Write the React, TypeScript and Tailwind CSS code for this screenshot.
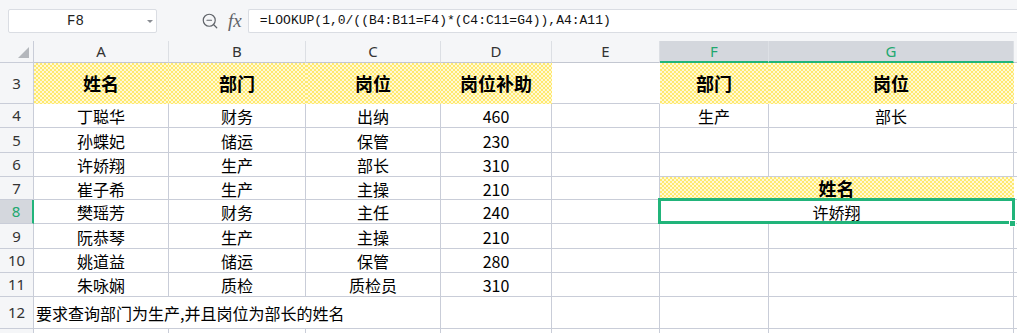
import { ZoomOut } from 'lucide-react';

// 表格用のクラス
const CJK = "font-['Microsoft_YaHei','Noto_Sans_CJK_SC',sans-serif]";
const LINE = 'border-[#c9cdd8]';
const YELLOW =
  'bg-[#ffe96e] bg-[radial-gradient(circle_at_1px_1px,#fff9d6_0.8px,transparent_0.9px),radial-gradient(circle_at_3px_3px,#fff9d6_0.8px,transparent_0.9px)] bg-size-[4px_4px]';

const COL_W = ['w-[135px]', 'w-[137px]', 'w-[135px]', 'w-[111px]', 'w-[108px]', 'w-[109px]', 'w-[245px]'];
const LETTERS = ['A', 'B', 'C', 'D', 'E', 'F', 'G'];

const rows = [
  { n: 4, h: 'h-[24px]', d: ['丁聪华', '财务', '出纳', '460'], f: '生产', g: '部长' },
  { n: 5, h: 'h-[25px]', d: ['孙蝶妃', '储运', '保管', '230'] },
  { n: 6, h: 'h-[24px]', d: ['许娇翔', '生产', '部长', '310'] },
  { n: 7, h: 'h-[23px]', d: ['崔子希', '生产', '主操', '210'], merged: 'title' },
  { n: 8, h: 'h-[24px]', d: ['樊瑶芳', '财务', '主任', '240'], merged: 'result' },
  { n: 9, h: 'h-[25px]', d: ['阮恭琴', '生产', '主操', '210'] },
  { n: 10, h: 'h-[24px]', d: ['姚道益', '储运', '保管', '280'] },
  { n: 11, h: 'h-[24px]', d: ['朱咏娴', '质检', '质检员', '310'] },
];

function RowHead({ n, active }: { n?: number; active?: boolean }) {
  return (
    <div
      className={`w-[34px] shrink-0 flex items-center justify-center border-b ${LINE} text-[15px] font-['Noto_Sans',sans-serif] ${
        active ? 'bg-[#d4d7dd] text-[#21a86f] border-r-2 border-r-[#21b47a]' : 'bg-[#f5f6f8] text-[#333] border-r'
      }`}
    >
      {n}
    </div>
  );
}

function Cell({ w, children, className = '' }: { w: string; children?: React.ReactNode; className?: string }) {
  return (
    <div className={`${w} shrink-0 flex items-center justify-center border-r border-b ${LINE} ${className}`}>
      {children}
    </div>
  );
}

export default function App() {
  return (
    <div className={`w-[1017px] h-[333px] overflow-hidden bg-white text-black ${CJK}`}>
      {/* 数式バー */}
      <div className="h-[41px] bg-[#f5f6f8] flex items-start pt-[9px] pl-[8px]">
        <div className="relative w-[149px] h-[24px] bg-white border border-[#dadde3] rounded-[2px] flex items-center justify-center font-['Liberation_Mono',monospace] text-[14px] text-[#222]">
          <span className="-ml-[14px]">F8</span>
          <span className="absolute right-[3px] top-[10px] w-0 h-0 border-l-[3px] border-r-[3px] border-t-[3px] border-l-transparent border-r-transparent border-t-[#8a8d93]" />
        </div>
        <ZoomOut className="ml-[44px] mt-[3px] w-[18px] h-[18px] text-[#5f6369]" strokeWidth={1.6} />
        <span className="ml-[9px] text-[19px] leading-[24px] italic font-['Liberation_Serif',serif] text-[#5f6369]">
          fx
        </span>
        <div className="ml-[6px] flex-1 h-[24px] bg-white border border-r-0 border-[#dadde3] rounded-l-[2px] flex items-center pl-[11px] font-['Liberation_Mono',monospace] text-[13px] text-[#111]">
          =LOOKUP(1,0/((B4:B11=F4)*(C4:C11=G4)),A4:A11)
        </div>
      </div>

      {/* 列ヘッダー */}
      <div className="flex h-[22px]">
        <div className={`relative w-[34px] shrink-0 bg-[#f5f6f8] border-r border-b ${LINE}`}>
          <span className="absolute right-[4px] bottom-[4px] w-0 h-0 border-l-[11px] border-b-[11px] border-l-transparent border-b-[#b4b7bc]" />
        </div>
        {LETTERS.map((l, i) => {
          const active = l === 'F' || l === 'G';
          return (
            <div
              key={l}
              className={`${COL_W[i]} shrink-0 flex items-center justify-center text-[15px] font-['Noto_Sans',sans-serif] ${
                active
                  ? 'bg-[#d4d7dd] text-[#21a86f] border-b-2 border-b-[#21b47a] border-r border-r-[#dde0e5]'
                  : 'bg-[#f5f6f8] text-[#333] border-b border-b-[#c3c7d1] border-r border-r-[#dcdfe4]'
              }`}
            >
              {l}
            </div>
          );
        })}
        <div className="flex-1 bg-[#f5f6f8] border-b border-[#c3c7d1]" />
      </div>

      {/* 3行目：見出し */}
      <div className="flex h-[41px]">
        <RowHead n={3} />
        {['姓名', '部门', '岗位', '岗位补助'].map((t, i) => (
          <Cell key={t} w={COL_W[i]} className={`${YELLOW} !border-transparent text-[18px] font-bold`}>
            {t}
          </Cell>
        ))}
        <Cell w={COL_W[4]} className="!border-r-transparent" />
        <Cell w={COL_W[5]} className={`${YELLOW} !border-transparent text-[18px] font-bold`}>
          部门
        </Cell>
        <Cell w={COL_W[6]} className={`${YELLOW} !border-transparent text-[18px] font-bold`}>
          岗位
        </Cell>
        <div className={`flex-1 border-b ${LINE}`} />
      </div>

      {/* データ行 */}
      {rows.map((r) => (
        <div key={r.n} className={`flex ${r.h}`}>
          <RowHead n={r.n} active={r.n === 8} />
          {r.d.map((t, i) => (
            <Cell key={i} w={COL_W[i]} className="text-[16px] pt-[1px]">
              {t}
            </Cell>
          ))}
          <Cell w={COL_W[4]} />
          {r.merged === 'title' ? (
            <Cell w="w-[354px]" className={`${YELLOW} !border-transparent text-[18px] font-bold`}>
              姓名
            </Cell>
          ) : r.merged === 'result' ? (
            <Cell w="w-[354px]" className="relative text-[16px] pt-[1px]">
              许娇翔
              <span className="absolute -left-[2px] -top-[2px] -right-[2px] -bottom-[1px] border-[3px] border-[#21b47a]" />
              <span className="absolute -right-[3px] -bottom-[4px] w-[7px] h-[7px] bg-[#21b47a] border border-white" />
            </Cell>
          ) : (
            <>
              <Cell w={COL_W[5]} className="text-[16px] pt-[1px]">
                {r.f}
              </Cell>
              <Cell w={COL_W[6]} className="text-[16px] pt-[1px]">
                {r.g}
              </Cell>
            </>
          )}
          <div className={`flex-1 border-b ${LINE}`} />
        </div>
      ))}

      {/* 12行目：説明 */}
      <div className="flex h-[32px]">
        <RowHead n={12} />
        <Cell w="w-[407px]" className="!justify-start pl-[2px] text-[16px] whitespace-nowrap">
          要求查询部门为生产,并且岗位为部长的姓名
        </Cell>
        {COL_W.slice(3).map((w, i) => (
          <Cell key={i} w={w} />
        ))}
        <div className={`flex-1 border-b ${LINE}`} />
      </div>

      {/* 13行目（下端で切れる） */}
      <div className="flex h-[24px]">
        <RowHead />
        {COL_W.map((w, i) => (
          <Cell key={i} w={w} />
        ))}
        <div className={`flex-1 border-b ${LINE}`} />
      </div>
    </div>
  );
}
